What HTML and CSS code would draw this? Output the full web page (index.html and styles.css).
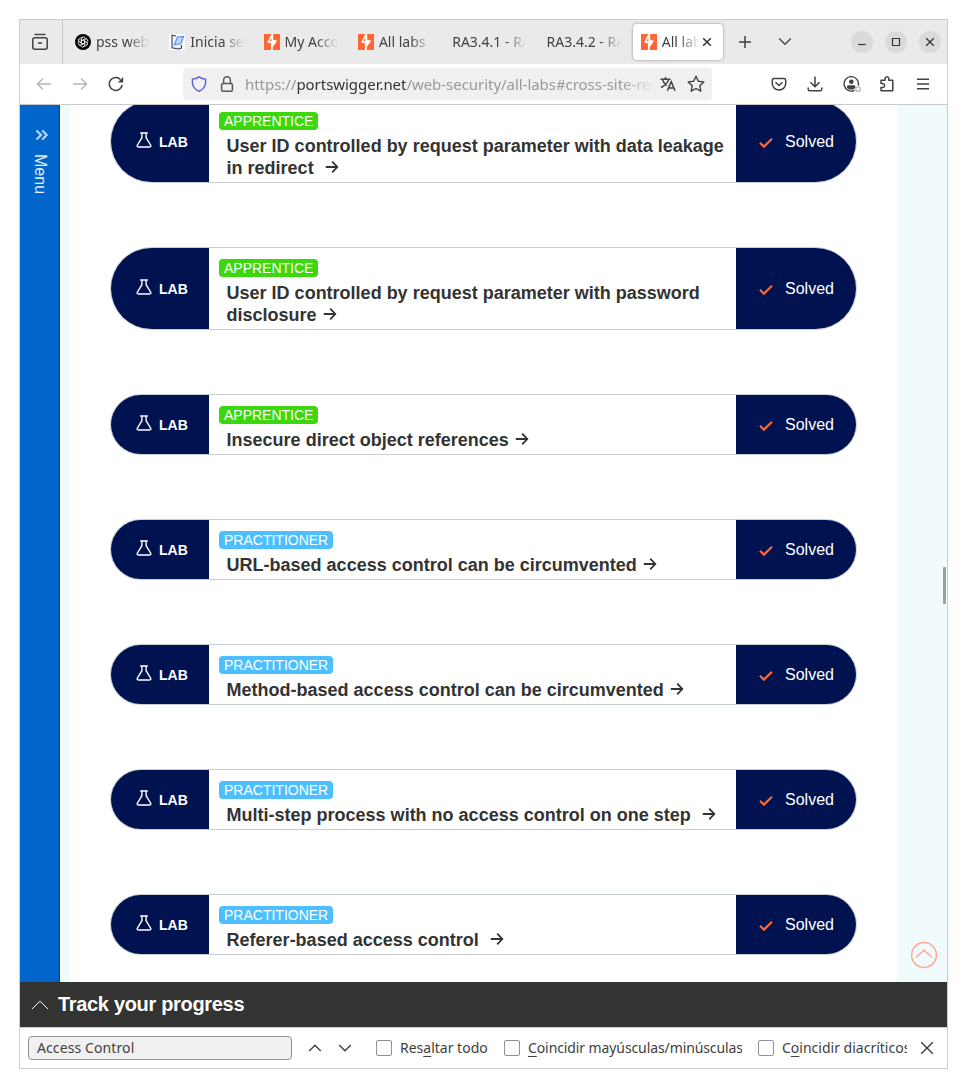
FILE: index.html
```html
<!DOCTYPE html>
<html lang="es">
<head>
<meta charset="utf-8">
<title>All labs</title>
<link rel="stylesheet" href="styles.css">
</head>
<body>
<svg class="defs" width="0" height="0">
  <symbol id="flask" viewBox="0 0 16 16"><path d="M4.2 1h7.6M5.9 1v4.7L1.3 13.2q-.7 1.7 1.1 1.8h11.2q1.8-.1 1.1-1.8L10.1 5.700V1" fill="none" stroke="#fff" stroke-width="1.4"/></symbol>
  <symbol id="check" viewBox="0 0 14 12"><path d="M1 5.800 4.900 9.600 13 1.800" fill="none" stroke="#ff6633" stroke-width="2.200"/></symbol>
  <symbol id="arrow" viewBox="0 0 14 14"><path d="M.8 7H12M7.200 1.700 12.300 7 7.200 12.300" fill="none" stroke="#333332" stroke-width="1.800"/></symbol>
  <symbol id="burp" viewBox="0 0 16 16"><path fill="#ff6633" d="M0 0h16v16H0z"/><path fill="#fff" d="M7.300 0h1.900v5.700l3.900 1.100L8.500 13.400V9.700L3.200 8.400z"/><path fill="#ff6633" d="M7.300 3.500v3.700H5.500z"/><path fill="#fff" d="M6.900 9.400h1.900V16H6.900z"/></symbol>
</svg>
<div class="window">
  <div class="tabbar">
    <div class="recent"><svg width="18" height="18" viewBox="0 0 18 18" fill="none" stroke="#414141" stroke-width="1.500"><path d="M3.500 1.500h11M7 10h4" /><path d="M1.800 6.800q0-2 2-2h10.400q2 0 2 2v7.400q0 2-2 2H3.800q-2 0-2-2z"/></svg></div>
    <div class="tabs">
      <div class="tab"><svg width="16" height="16" viewBox="0 0 16 16"><circle cx="8" cy="8" r="8"/><g fill="none" stroke="#fff" stroke-width=".7"><path id="petal" d="M6.300 8.900V5.200Q6.500 3 8.500 3q1.500.1 2.200 1.300M6.300 6.900 9.500 5q2-.9 3.200.8"/><use href="#petal" transform="rotate(60 8 8)"/><use href="#petal" transform="rotate(120 8 8)"/><use href="#petal" transform="rotate(180 8 8)"/><use href="#petal" transform="rotate(240 8 8)"/><use href="#petal" transform="rotate(300 8 8)"/></g></svg><span class="label">pss web</span></div>
      <div class="tab"><svg width="16" height="16" viewBox="0 0 16 16"><path fill="#fff" d="M0 0h16v16H0z"/><path d="M7 2 3 1.200v12.600l6.500 1.200 3-1V11" fill="#eef3ff" stroke="#333b4d" stroke-width="1.100"/><path d="M8.300 3.200 14.500 2.500 12 9.500 5.500 10.800z" fill="#c5d8ff" stroke="#5a8bf0" stroke-width="1.200"/></svg><span class="label">Inicia ses</span></div>
      <div class="tab"><svg width="16" height="16"><use href="#burp"/></svg><span class="label">My Accou</span></div>
      <div class="tab"><svg width="16" height="16"><use href="#burp"/></svg><span class="label">All labs</span></div>
      <div class="tab"><span class="label">RA3.4.1 - RA</span></div>
      <div class="tab"><span class="label">RA3.4.2 - RA</span></div>
      <div class="tab active"><svg width="16" height="16"><use href="#burp"/></svg><span class="label">All labs</span><svg class="close" width="10" height="10" viewBox="0 0 10 10"><path d="M1.200 1.200 8.800 8.800M8.800 1.200 1.200 8.800" stroke="#333" stroke-width="1.500"/></svg></div>
    </div>
    <svg class="plus" width="14" height="14" viewBox="0 0 14 14"><path d="M7 1v12M1 7h12" stroke="#414141" stroke-width="1.500"/></svg>
    <svg class="alltabs" width="14" height="14" viewBox="0 0 14 14"><path d="M1.200 3.500 7 9.300l5.800-5.800" fill="none" stroke="#414141" stroke-width="1.300"/></svg>
    <div class="controls">
      <span class="ctl"><svg width="10" height="10" viewBox="0 0 10 10"><path d="M1.200 7.500h7.600" stroke="#333" stroke-width="1.200"/></svg></span>
      <span class="ctl"><svg width="10" height="10" viewBox="0 0 10 10"><path d="M1.500 1.500h7v7h-7z" fill="none" stroke="#333" stroke-width="1.200"/></svg></span>
      <span class="ctl"><svg width="10" height="10" viewBox="0 0 10 10"><path d="m1.200 1.200 7.600 7.600M8.800 1.200 1.200 8.800" stroke="#333" stroke-width="1.300"/></svg></span>
    </div>
  </div>

  <div class="toolbar">
    <div class="nav">
      <svg width="16" height="16" viewBox="0 0 16 16" fill="none" stroke="#b5b5b5" stroke-width="1.400"><path d="M15 8H1.500M7 2.500 1.500 8 7 13.500"/></svg>
      <svg width="16" height="16" viewBox="0 0 16 16" fill="none" stroke="#b5b5b5" stroke-width="1.400"><path d="M1 8h13.500M9 2.500 14.500 8 9 13.500"/></svg>
      <svg width="16" height="16" viewBox="0 0 16 16" fill="none" stroke="#414141" stroke-width="1.500"><path d="M14.200 9A6.500 6.500 0 1 1 12.500 3.400"/><path d="M15.200 1v5.500H9.800z" fill="#414141" stroke="none"/></svg>
    </div>
    <div class="urlbar">
      <svg width="16" height="16" viewBox="0 0 16 16" fill="none" stroke="#5a5fe0" stroke-width="1.400"><path d="M8 .8Q11 2.800 14.600 3.100V7q-.5 5.500-6.600 8.400Q1.900 12.500 1.400 7V3.100Q5 2.800 8 .8z"/></svg>
      <svg class="lock" width="16" height="16" viewBox="0 0 16 16" fill="none" stroke="#555" stroke-width="1.500"><rect x="2.600" y="7.500" width="10.800" height="7.700" rx="1.500"/><path d="M4.600 7.500V4.200a3.400 3.400 0 0 1 6.800 0v3.300"/></svg>
      <span class="url">https://<b>portswigger.net</b>/web-security/all-labs#cross-site-rec</span>
      <svg width="16" height="16" viewBox="0 0 16 16" fill="none" stroke="#414141" stroke-width="1.500"><path d="M.5 3.200h10M5.500 1v2M8.800 3.500Q6.500 9 1 11.500M2.700 4Q4 8 7 9.700M7.400 14.700l3.800-9 3.900 9M8.800 12h5"/></svg>
      <svg class="star" width="18" height="18" viewBox="0 0 18 18" fill="none" stroke="#414141" stroke-width="1.400" stroke-linejoin="round"><path d="m9 1.200 2.300 5 5.500.7-4 3.800 1 5.500L9 13.500l-4.800 2.700 1-5.500-4-3.800 5.500-.7z"/></svg>
    </div>
    <div class="actions">
      <svg width="16" height="16" viewBox="0 0 16 16" fill="none" stroke="#414141" stroke-width="1.500"><path d="M3 2.500h10q1.700 0 1.700 1.700V7.500a6.700 6.500 0 0 1-13.400 0V4.200Q1.300 2.500 3 2.500z"/><path d="m4.500 6.200 3.500 3.300 3.500-3.300"/></svg>
      <svg width="16" height="16" viewBox="0 0 16 16" fill="none" stroke="#414141" stroke-width="1.500"><path d="M8 .5v10M3.500 6.300 8 10.800l4.500-4.500M1.200 11.500v1.700q0 1.600 1.600 1.600h10.400q1.600 0 1.600-1.600v-1.700"/></svg>
      <svg width="18" height="16" viewBox="0 0 18 16" fill="none" stroke="#414141" stroke-width="1.400"><path d="M11.500 14.300A7.200 7.200 0 1 1 15.300 9.500"/><circle cx="8.300" cy="5.800" r="2.300" fill="#414141" stroke="none"/><path d="M3.700 11.200q0-1.900 2-1.900h5.200q1.700 0 1.700 1.900l-2.200 2.200H6z" fill="#414141" stroke="none"/><circle cx="15" cy="13" r="2.300" stroke="#aaa" stroke-width="1.100"/></svg>
      <svg width="16" height="16" viewBox="0 0 16 16" fill="none" stroke="#414141" stroke-width="1.500" stroke-linejoin="round"><path d="M2 7.500V4.300h4V2.700q.2-1.900 1.900-1.900t1.900 1.900v1.600h4v10.500H2v-3.200h1.800q1.800-.2 1.800-2t-1.800-2.100z"/></svg>
      <svg width="16" height="16" viewBox="0 0 16 16" stroke="#414141" stroke-width="1.400"><path d="M2 3.200h12M2 8h12M2 12.800h12"/></svg>
    </div>
  </div>

  <div class="page">
    <div class="side"><svg width="14" height="12" viewBox="0 0 14 12" fill="none" stroke="#bcd7f2" stroke-width="2.100"><path d="m1.500 1.500 4.500 4.500-4.500 4.500M7.200 1.500l4.500 4.500-4.500 4.500"/></svg><span>Menu</span></div>
    <div class="content">
      <div class="lab"><div class="kind"><svg width="16" height="16"><use href="#flask"/></svg>LAB</div><div class="body"><span class="level easy">APPRENTICE</span><div class="title">User ID controlled by request parameter with data leakage in redirect &nbsp;<svg width="14" height="14"><use href="#arrow"/></svg></div></div><div class="state"><svg width="14" height="12"><use href="#check"/></svg>Solved</div></div>
      <div class="lab"><div class="kind"><svg width="16" height="16"><use href="#flask"/></svg>LAB</div><div class="body"><span class="level easy">APPRENTICE</span><div class="title">User ID controlled by request parameter with password disclosure <svg width="14" height="14"><use href="#arrow"/></svg></div></div><div class="state"><svg width="14" height="12"><use href="#check"/></svg>Solved</div></div>
      <div class="lab"><div class="kind"><svg width="16" height="16"><use href="#flask"/></svg>LAB</div><div class="body"><span class="level easy">APPRENTICE</span><div class="title">Insecure direct object references <svg width="14" height="14"><use href="#arrow"/></svg></div></div><div class="state"><svg width="14" height="12"><use href="#check"/></svg>Solved</div></div>
      <div class="lab"><div class="kind"><svg width="16" height="16"><use href="#flask"/></svg>LAB</div><div class="body"><span class="level medium">PRACTITIONER</span><div class="title">URL-based access control can be circumvented <svg width="14" height="14"><use href="#arrow"/></svg></div></div><div class="state"><svg width="14" height="12"><use href="#check"/></svg>Solved</div></div>
      <div class="lab"><div class="kind"><svg width="16" height="16"><use href="#flask"/></svg>LAB</div><div class="body"><span class="level medium">PRACTITIONER</span><div class="title">Method-based access control can be circumvented <svg width="14" height="14"><use href="#arrow"/></svg></div></div><div class="state"><svg width="14" height="12"><use href="#check"/></svg>Solved</div></div>
      <div class="lab"><div class="kind"><svg width="16" height="16"><use href="#flask"/></svg>LAB</div><div class="body"><span class="level medium">PRACTITIONER</span><div class="title">Multi-step process with no access control on one step &nbsp;<svg width="14" height="14"><use href="#arrow"/></svg></div></div><div class="state"><svg width="14" height="12"><use href="#check"/></svg>Solved</div></div>
      <div class="lab"><div class="kind"><svg width="16" height="16"><use href="#flask"/></svg>LAB</div><div class="body"><span class="level medium">PRACTITIONER</span><div class="title">Referer-based access control &nbsp;<svg width="14" height="14"><use href="#arrow"/></svg></div></div><div class="state"><svg width="14" height="12"><use href="#check"/></svg>Solved</div></div>
    </div>
    <svg class="totop" width="28" height="28" viewBox="0 0 28 28" fill="none" stroke="#ffa78c" stroke-width="1.500"><circle cx="14" cy="14" r="12.400"/><path d="m5.800 16.500 8.200-7.200 8.200 7.200"/></svg>
    <div class="thumb"></div>
  </div>

  <div class="track"><svg width="18" height="10" viewBox="0 0 18 10" fill="none" stroke="#fff" stroke-width="1"><path d="M1 9 9 1.200 17 9"/></svg>Track your progress</div>

  <div class="findbar">
    <div class="field">Access Control</div>
    <svg class="prev" width="14" height="14" viewBox="0 0 14 14" fill="none" stroke="#414141" stroke-width="1.400"><path d="M1.200 10 7 4.200l5.800 5.800"/></svg>
    <svg class="next" width="14" height="14" viewBox="0 0 14 14" fill="none" stroke="#414141" stroke-width="1.400"><path d="M1.200 4 7 9.800 12.800 4"/></svg>
    <div class="option all"><i class="box"></i><span>Res<u>a</u>ltar todo</span></div>
    <div class="option case"><i class="box"></i><span><u>C</u>oincidir mayúsculas/minúsculas</span></div>
    <div class="option marks"><i class="box"></i><span>C<u>o</u>incidir diacríticos</span></div>
    <svg class="dismiss" width="14" height="14" viewBox="0 0 14 14"><path d="m1.200 1.200 11.600 11.600M12.800 1.200 1.200 12.800" stroke="#333" stroke-width="1.300"/></svg>
  </div>
</div>
</body>
</html>
```

FILE: styles.css
```css
* { box-sizing: border-box; }
body { margin: 0; padding: 19px; background: #fff; font-family: "Noto Sans", sans-serif; font-size: 14px; color: #414141; }
svg { display: block; flex: none; }
.defs { position: absolute; }
.window { width: 929px; height: 1050px; border: 1px solid #ccc; display: flex; flex-direction: column; overflow: hidden; }

.tabbar { height: 44px; background: #eaeaea; display: flex; align-items: center; flex: none; }
.recent { width: 43px; height: 44px; border-right: 1px solid #c4c4c4; display: flex; align-items: center; padding-left: 11px; }
.tabs { display: flex; gap: 4px; padding-left: 4px; }
.tab { width: 90.3px; height: 36px; padding: 0 8px; border-radius: 4px; display: flex; align-items: center; gap: 5px; }
.tab.active { background: #fff; box-shadow: 0 0 3px rgba(0,0,0,.4); }
.label { flex: 1; min-width: 0; height: 20px; line-height: 19px; overflow: hidden; white-space: nowrap; letter-spacing: 0; -webkit-mask-image: linear-gradient(to left, transparent, #000 22px); mask-image: linear-gradient(to left, transparent, #000 22px); }
.active .label { flex: none; width: 38px; }
.close { margin-left: -3px; }
.plus { margin-left: 15px; }
.alltabs { margin-left: 26px; }
.controls { margin-left: auto; padding-right: 6px; display: flex; gap: 12px; }
.ctl { width: 22px; height: 22px; border-radius: 50%; background: #dadada; display: flex; align-items: center; justify-content: center; }

.toolbar { height: 41px; border-bottom: 1px solid #c9c9c9; display: flex; align-items: center; flex: none; }
.nav { display: flex; gap: 20px; width: 163px; padding-left: 16px; }
.urlbar { width: 529px; height: 32px; background: #f0f0f0; border-radius: 4px; display: flex; align-items: center; padding: 0 7px 0 8px; }
.lock { margin-left: 12px; }
.url { width: 410px; margin: 0 5px 0 10px; overflow: hidden; white-space: nowrap; color: #999; font-size: 15px; letter-spacing: -.04px; line-height: 22px; -webkit-mask-image: linear-gradient(to left, transparent, #000 34px); mask-image: linear-gradient(to left, transparent, #000 34px); }
.url b { font-weight: 400; color: #333; }
.star { margin-left: 11px; }
.actions { display: flex; gap: 20px; margin-left: auto; padding-right: 16px; }
.actions svg:nth-child(3) { margin-right: -2px; }

.page { height: 877px; flex: none; background: #f1fafd; display: flex; position: relative; overflow: hidden; font-family: "Liberation Sans", Arial, sans-serif; }
.side { width: 40px; background: #0066cc; box-shadow: inset -2px 0 2px -1px rgba(0,30,90,.45); color: #e4effa; display: flex; flex-direction: column; align-items: center; gap: 13px; padding: 24px 0 0 3px; font-size: 16px; }
.side span { writing-mode: vertical-rl; line-height: 18px; margin-right: 3px; }
.content { width: 827px; margin-left: 10px; background: #fff; padding-left: 40px; display: flex; flex-direction: column; gap: 64px; }
.lab { width: 747px; min-height: 61px; flex: none; border: 1px solid #c8cfd1; border-radius: 41.5px; overflow: hidden; display: flex; }
.lab:first-child { margin-top: -5px; }
.kind { width: 98px; background: #00124f; color: #fff; font-weight: 700; font-size: 14px; display: flex; align-items: center; gap: 7px; padding: 0 0 0 25px; }
.kind svg { margin-top: -3px; }
.body { width: 527px; padding: 11px 8px 3px 10px; }
.level { display: block; width: max-content; height: 18px; line-height: 18px; padding: 0 5px; border-radius: 4px; color: #fff; font-size: 14px; }
.easy { background: #3cd70c; }
.medium { background: #4dbfff; }
.title { margin-top: 5px; padding-left: 7.600px; font-size: 18px; line-height: 22px; font-weight: 700; color: #333332; }
.title svg { display: inline-block; vertical-align: 0; margin-left: 1.500px; }
.state { flex: 1; background: #00124f; color: #fff; font-size: 16px; display: flex; align-items: center; gap: 12px; padding-left: 23px; }
.state svg { margin-top: 3px; }
.totop { position: absolute; right: 9px; bottom: 13px; }
.thumb { position: absolute; right: 1px; top: 462px; width: 3px; height: 37px; background: #9aa0a0; border-radius: 1px; }

.track { height: 45px; flex: none; background: #333332; color: #fff; display: flex; align-items: center; gap: 9px; padding-left: 11px; font: 700 20px "Liberation Sans", Arial, sans-serif; letter-spacing: -.32px; }

.findbar { height: 41px; flex: none; border-top: 1px solid #ccc; display: flex; align-items: center; padding-left: 8px; }
.field { width: 264px; height: 24px; border: 1px solid #929292; border-radius: 4px; background: #f0f0f0; padding-left: 8px; line-height: 21px; letter-spacing: .1px; }
.prev { margin-left: 16px; }
.next { margin-left: 16px; }
.option { display: flex; align-items: center; gap: 8px; white-space: nowrap; flex: none; }
.option span { overflow: hidden; line-height: 22px; }
.option u { text-underline-offset: 3px; }
.all { width: 112px; margin-left: 24px; margin-right: 16px; }
.case { width: 238px; margin-right: 16px; letter-spacing: -.1px; }
.marks { width: 149px; }
.box { width: 16px; height: 16px; border: 1px solid #8f8f9d; border-radius: 2px; flex: none; }
.dismiss { margin-left: 13px; }
```
